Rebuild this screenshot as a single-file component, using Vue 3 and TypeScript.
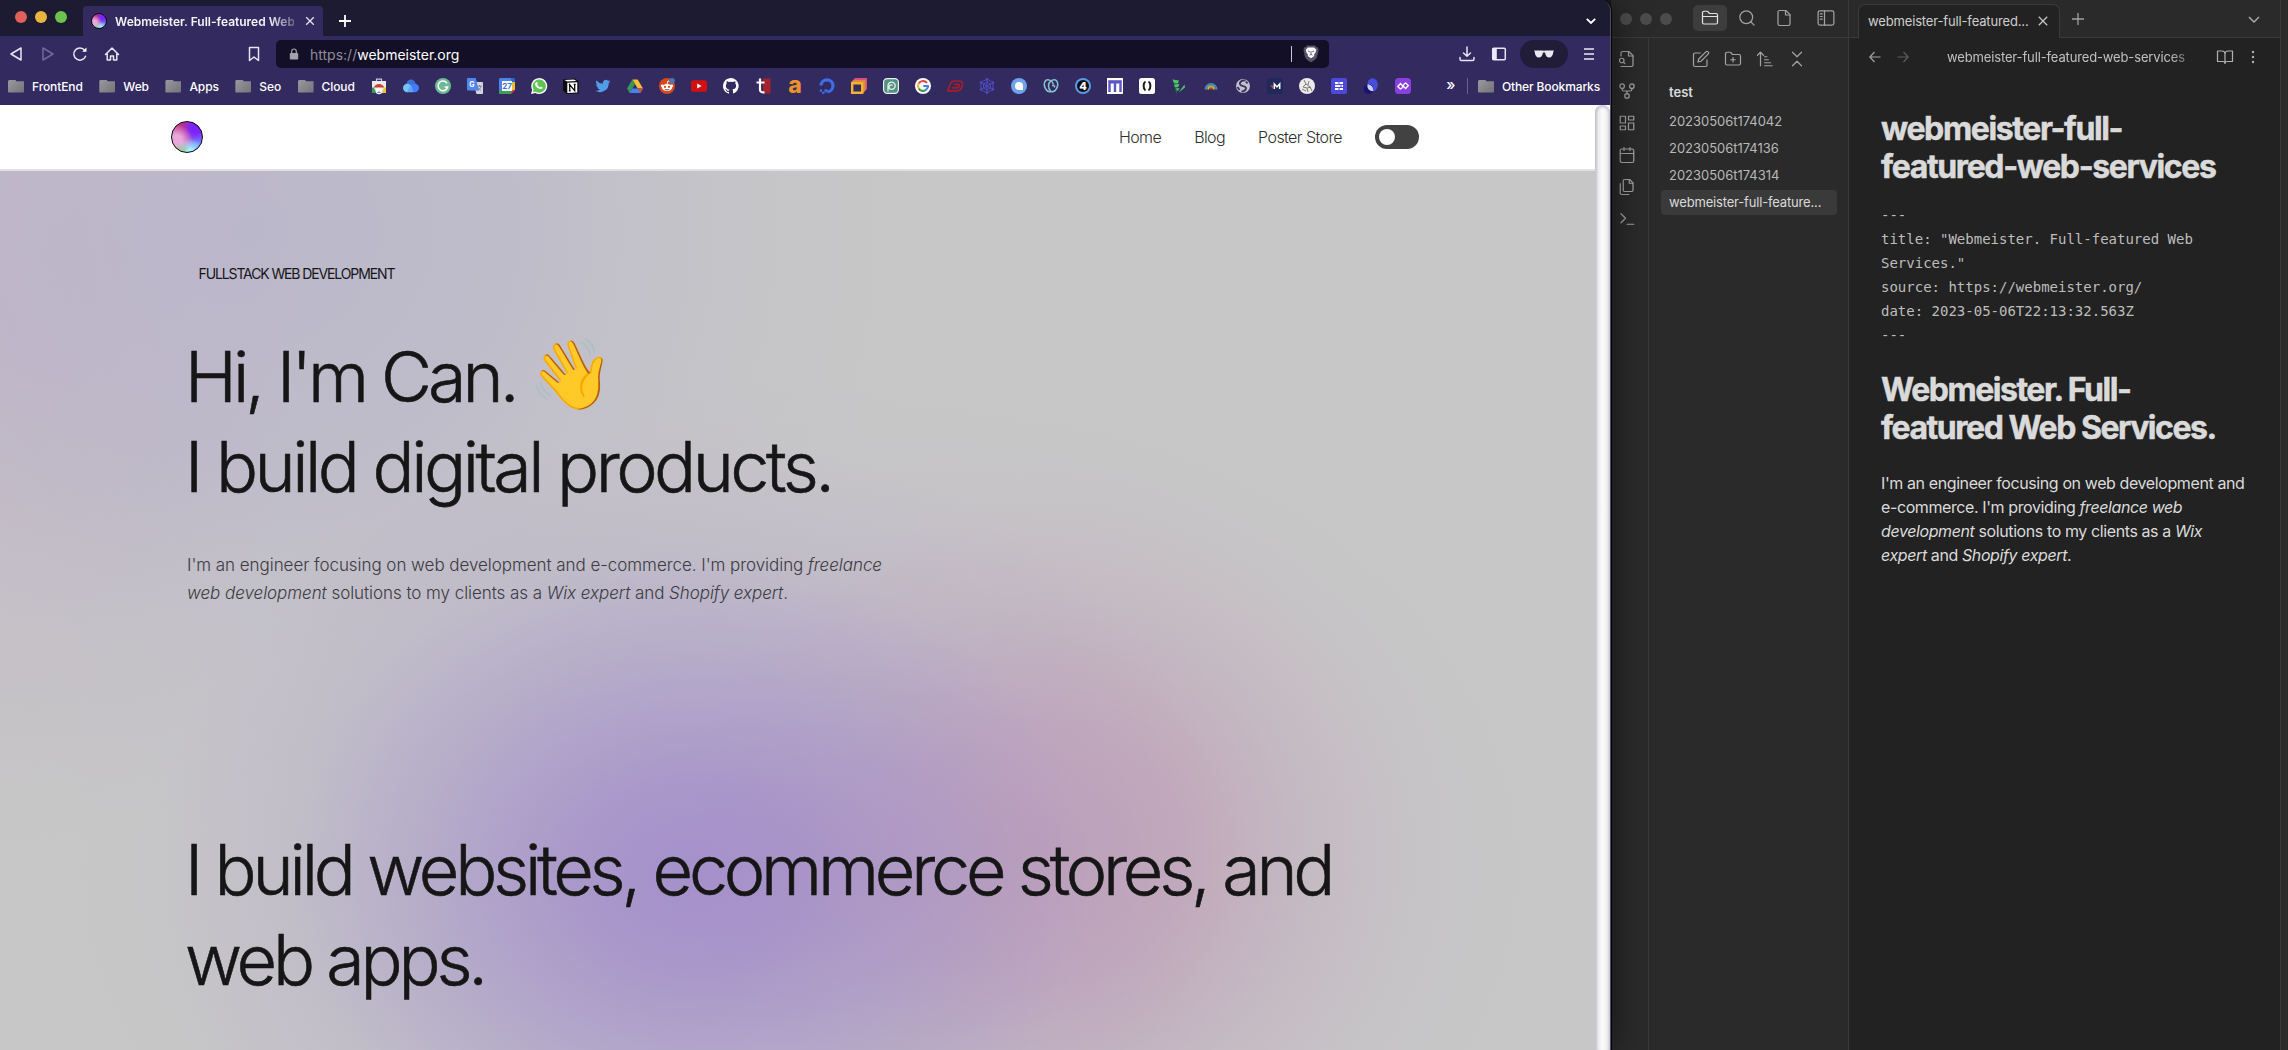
<script setup lang="ts">
interface Glyph { name: string; svg: string }

const folders: string[] = ['FrontEnd', 'Web', 'Apps', 'Seo', 'Cloud']

const round = (fill: string, inner = ''): string => `<circle cx="8" cy="8" r="8" fill="${fill}"/>${inner}`
const label = (t: string, fill: string, size: number, y: number, weight = 700, x = 8): string =>
  `<text x="${x}" y="${y}" font-family="Inter, sans-serif" font-weight="${weight}" font-size="${size}" fill="${fill}" text-anchor="middle">${t}</text>`

const bookmarks: Glyph[] = [
  { name: 'Web Store', svg: '<path d="M1 3h14v12H1z" fill="#e9e9ee"/><path d="M5.500 3V1.200h5V3" fill="none" stroke="#c9c9d2" stroke-width="1.200"/><path d="M2.800 9.500a5.600 5.600 0 0 1 10.400 0z" fill="#cf3e34"/><path d="M1 15V9.500h1.800L5.500 15z" fill="#3c9a54"/><path d="M15 15V9.500h-1.800L10.500 15z" fill="#f3c02f"/><circle cx="8" cy="13" r="3.200" fill="#fff"/><path d="M5.900 15a2.200 2.200 0 0 1 4.200 0z" fill="#4a83ea"/>' },
  { name: 'Cloud', svg: '<circle cx="8" cy="6.200" r="4.600" fill="#3f6fd8"/><circle cx="4.200" cy="10" r="4.200" fill="#77c3f8"/><circle cx="11.800" cy="10" r="4.200" fill="#3f7dfb"/><path d="M4 14.200 8 6l2.500 8.200z" fill="#5aa7fb"/>' },
  { name: 'Grammarly', svg: round('#6fba95', '<path d="M12 5.300A4.800 4.800 0 1 0 12.600 9H9.600" fill="none" stroke="#fff" stroke-width="1.500"/>') },
  { name: 'Translate', svg: '<path d="M6 4h9.200a.8.8 0 0 1 .8.8v10.400a.8.8 0 0 1-.8.8H9.500z" fill="#d4d6dc"/><path d="M10 8.200h5M12.500 7v1.200m1.500 0c-.4 2-1.800 3.500-3.600 4.600m.7-3.300c.6 1.200 1.700 2.300 3 3" fill="none" stroke="#75809a" stroke-width=".9"/><path d="M.8 0h8l3 12.500H.8a.8.8 0 0 1-.8-.8V.8A.8.8 0 0 1 .8 0z" fill="#5187ec"/>' + label('G', '#fff', 7, 8.8, 700, 4.8) },
  { name: 'Calendar', svg: '<path d="M0 1.500A1.500 1.500 0 0 1 1.500 0H12v4H4v12H1.500A1.500 1.500 0 0 1 0 14.500z" fill="#4b83e9"/><path d="M12 0h2.500A1.500 1.500 0 0 1 16 1.500V12h-4z" fill="#2c66cf"/><path d="M12 4h4v8h-4z" fill="#efbd34"/><path d="M0 12h12v4H1.500A1.500 1.500 0 0 1 0 14.500z" fill="#3f9d57"/><path d="M12 12h4l-4 4z" fill="#d84b3c"/><path d="M3 3h10v10H3z" fill="#fff"/>' + label('27', '#3f74d6', 8, 11) },
  { name: 'WhatsApp', svg: '<path d="M0 16l1.200-4.200A8 8 0 1 1 4.300 15z" fill="#fff"/><path d="M1.900 14.100l.7-2.600a6.600 6.600 0 1 1 2.200 2.200z" fill="#5fc454"/><path d="M5.300 4.200c.6-.5 1 0 1.500 1.400.1.400-.6 1-.5 1.200.6 1.100 1.500 1.900 2.700 2.400.3.100.8-.9 1.100-.8 1.300.6 1.600.8 1.500 1.100-.2 1.400-1.700 1.800-2.800 1.500-2.300-.7-4-2.300-4.700-4.300-.3-1 .3-2 1.200-2.500z" fill="#fff"/>' },
  { name: 'Notion', svg: '<path d="M0 1.600 11.500.4 15.600 3v12.600l-12 .4L0 12.400z" fill="#0b0b0d"/><path d="M1.500 2.100 11 1.400l2.400 1.500-9.400.6z" fill="#fff"/><path d="M4.300 4.800 14.300 4.200v10.300l-10 .6z" fill="#fff"/><path d="M6.700 12.800V6.700l5 6V6.300M5.800 6.700h1.500M10.700 6.300h2M5.800 12.800h1.900" fill="none" stroke="#0b0b0d" stroke-width="1.300"/>' },
  { name: 'Twitter', svg: '<path transform="scale(.667)" d="M23 4.900c-.8.400-1.700.6-2.600.8.900-.6 1.600-1.400 2-2.500-.9.500-1.900.9-2.900 1.100a4.600 4.600 0 0 0-7.800 4.200A13 13 0 0 1 2.200 3.700a4.600 4.600 0 0 0 1.400 6.100c-.7 0-1.400-.2-2-.6 0 2.300 1.500 4.200 3.600 4.700-.7.200-1.300.2-2 .1.600 1.800 2.300 3.100 4.200 3.200A9.200 9.200 0 0 1 .6 19a13 13 0 0 0 20-11.600c.9-.6 1.700-1.400 2.400-2.500z" fill="#539ce8"/>' },
  { name: 'Drive', svg: '<path d="M5.300 1.500h5.400L16 10.500h-5.300z" fill="#f3bf35"/><path d="M5.300 1.500 8 6 2.700 15 0 10.500z" fill="#37975a"/><path d="M5.300 10.500H16L13.300 15H2.700z" fill="#4a82ea"/><path d="M13.300 15 16 10.500h-5.300z" fill="#cf4a3c"/>' },
  { name: 'Reddit', svg: round('#d8481f', '<ellipse cx="8" cy="9.500" rx="5" ry="3.600" fill="#fff"/><circle cx="3.300" cy="8" r="1.400" fill="#fff"/><circle cx="12.700" cy="8" r="1.400" fill="#fff"/><path d="M8 6 9 3l2.500.6" fill="none" stroke="#fff" stroke-width=".9"/><circle cx="6" cy="8.900" r="1.100" fill="#d8481f"/><circle cx="10" cy="8.900" r="1.100" fill="#d8481f"/><path d="M5.900 11.200c1.200.9 3 .9 4.200 0" fill="none" stroke="#333" stroke-width=".8"/><circle cx="13" cy="2.800" r="2.800" fill="#4579b8"/>') },
  { name: 'YouTube', svg: '<rect y="2.200" width="16" height="11.600" rx="2.600" fill="#d40f10"/><path d="M6.200 5.600v4.800L10.600 8z" fill="#fff"/>' },
  { name: 'GitHub', svg: '<path d="M8 0C3.600 0 0 3.600 0 8c0 3.500 2.300 6.500 5.500 7.600.4.100.5-.2.500-.4v-1.400c-2.200.5-2.700-1-2.700-1-.4-.9-.9-1.200-.9-1.200-.7-.5.100-.5.100-.5.800.1 1.200.8 1.200.8.700 1.200 1.900.9 2.300.7.100-.5.300-.9.500-1.100-1.800-.2-3.600-.9-3.600-4 0-.9.300-1.600.8-2.100-.1-.2-.4-1 .1-2.100 0 0 .7-.2 2.200.8a7.500 7.500 0 0 1 4 0c1.500-1 2.200-.8 2.200-.8.400 1.100.2 1.900.1 2.100.5.600.8 1.300.8 2.100 0 3.100-1.900 3.700-3.700 3.900.3.300.6.800.6 1.500v2.200c0 .2.100.5.500.4A8 8 0 0 0 8 0z" fill="#fff"/>' },
  { name: 'Tutorials', svg: '<path d="M8 .5h7.500v15H8z" fill="#a3222b"/><path d="M1.500 4.500h8M5 .5v11.200c0 2 1.500 3 4.500 2.700" fill="none" stroke="#fff" stroke-width="2.200"/>' },
  { name: 'Authory', svg: label('a', '#ec922c', 23, 15, 800) },
  { name: 'DigitalOcean', svg: '<path d="M2 7.500a6 6 0 1 1 6.500 6.300" fill="none" stroke="#3c6fe6" stroke-width="3.200"/><path d="M5.500 11.200h3v3h-3zM3 13.800h2.500v2H3zM.8 11.600h2.200v2.200H.8z" fill="#3c6fe6"/>' },
  { name: 'Boxes', svg: '<path d="M4 0h12v11l-4.500 5V4H0z" fill="#d4507e"/><path d="M2.500 2h12v10L11 16V5H1z" fill="#dd8a3a"/><path d="M1.200 5.200h10v9.600h-10z" fill="#332a60" stroke="#f0b22f" stroke-width="2.400"/>' },
  { name: 'Spiral', svg: '<rect x=".6" y=".6" width="14.800" height="14.800" rx="3.600" fill="#51917f" stroke="#e8f2ee" stroke-width="1.200"/><path d="M5 13.500V7.800a3.600 3.600 0 1 1 3.600 3.500 2.200 2.200 0 1 1 1-3.900" fill="none" stroke="#e6f2ec" stroke-width="1.300"/>' },
  { name: 'Google', svg: round('#fff', '<g fill="none" stroke-width="2.100"><path d="M12 4.900A5 5 0 0 0 3.700 5.500" stroke="#dd4b3c"/><path d="M3.700 5.500a5 5 0 0 0 0 5" stroke="#f0b92f"/><path d="M3.700 10.500a5 5 0 0 0 7.700 1.100" stroke="#3a9b55"/><path d="M11.400 11.600A5 5 0 0 0 13 8H8.200" stroke="#4880e6"/></g>') },
  { name: 'Coil', svg: '<g fill="none" stroke="#a51f27" stroke-width="1.700"><path d="M.9 12.800 3.600 5.500C4.300 3.700 5.400 3 7.200 3h5.300C15 3 16 5 15.300 7.300l-.9 2.500c-.7 2-2 3-4 3z"/><path d="M5 9.800h5.400c.7 0 1.200-.4 1.400-1l.3-.9c.3-.8 0-1.500-.9-1.500H7"/></g>' },
  { name: 'Web', svg: '<g fill="none" stroke="#4e4cc0" stroke-width="1"><path d="M8 1 14 4.500v7L8 15l-6-3.500v-7z"/><path d="M8 4 11.500 6v4L8 12l-3.500-2V6zM8 1v14M2 4.500l12 7M14 4.500l-12 7"/></g><g fill="#4e4cc0"><circle cx="8" cy="1.200" r="1.200"/><circle cx="14" cy="4.500" r="1.200"/><circle cx="14" cy="11.500" r="1.200"/><circle cx="8" cy="14.800" r="1.200"/><circle cx="2" cy="11.500" r="1.200"/><circle cx="2" cy="4.500" r="1.200"/></g>' },
  { name: 'Drop', svg: round('#6da3ec', '<path d="M12 12H8a4 4 0 1 1 4-4z" fill="#fff"/>') },
  { name: 'GoDaddy', svg: '<g fill="none" stroke="#86c3cf" stroke-width="1.500"><path d="M8 13.500C3.500 15-.2 7.500 2 3.500 4.200-.2 9.500 2.500 10.500 6.500"/><path d="M8 13.500C12.500 15 16.200 7.500 14 3.500 11.800-.2 6.500 2.500 5.500 7c-.3 2.500.7 4.500 2.500 6.500"/><path d="M11.500 7.500H9M11.500 7.500v2"/></g>' },
  { name: 'Four', svg: round('#5b9be6', `<circle cx="8" cy="8" r="6" fill="#0e0e12"/>${label('4', '#fff', 11, 12, 800)}`) },
  { name: 'M', svg: '<path d="M0 0h16v16H0z" fill="#fff"/><path d="M2.500 14V4.300h11V14M8 4.300V14" fill="none" stroke="#5d55c4" stroke-width="2.400"/><path d="M1.300 3h13.400" stroke="#5d55c4" stroke-width="1.600"/>' },
  { name: 'Brackets', svg: '<rect width="16" height="16" rx="2.500" fill="#fff"/><path d="M6.500 3.500C4 5 4 11 6.500 12.500M9.500 3.500C12 5 12 11 9.500 12.500" fill="none" stroke="#1c1c20" stroke-width="2"/>' },
  { name: 'Vine', svg: '<path d="M1.500 1.500 6.500 2.500v10L5.500 16z" fill="#1f6a40"/><path d="M1.500 1.500 8 2.500 7 5.500 3 5zM3 6.500l5.500-.5-1.200 3-3.300.3zM4.500 10.500l4-.5L7 13zM7.500 14.500 13.500 6.500 14 9.500z" fill="#4fc26c"/>' },
  { name: 'Rainbow', svg: '<g fill="none" stroke-width="1.400"><path d="M2.200 11.500a5.800 5.800 0 0 1 11.600 0" stroke="#4f86d8"/><path d="M3.800 11.500a4.200 4.200 0 0 1 8.400 0" stroke="#57ab6c"/><path d="M5.200 11.500a2.800 2.800 0 0 1 5.600 0" stroke="#dfb345"/><path d="M6.600 11.500a1.400 1.400 0 0 1 2.800 0" stroke="#c24a42"/></g>' },
  { name: 'Globe', svg: '<circle cx="8" cy="8" r="7" fill="#c3c1cc"/><path d="M10.500 2.500C7 2 4.200 4 5 6.300s5.500 1.400 6 3.500-2.200 3.500-4.500 3.800M11 3.500l1.500 2M2.500 9l2 3" fill="none" stroke="#3a3263" stroke-width="1.900"/>' },
  { name: 'Mail', svg: '<rect width="16" height="16" rx="1.500" fill="#202a5a"/><path d="M3 7.500h3v3z" fill="#dc4436"/><path d="M7.300 11V6l2.700 3 2.700-3v5" fill="none" stroke="#fff" stroke-width="1.500"/>' },
  { name: 'Sketch', svg: round('#ecebe9', '<path d="M5 2l2 4-3 3 4 1 1 4M7 6l4 3 2 4M8 10l4-1M3 11l4 2M10 3l-1 4" fill="none" stroke="#6f6d6a" stroke-width=".9"/>') },
  { name: 'Blocks', svg: '<rect width="16" height="16" rx="2" fill="#4c49dc"/><path d="M4 4h3.500v2H4zM8.500 4H12v2H8.500zM4 7h5.500v2H4zM10.500 7H12v2h-1.500zM4 10h3.500v2H4zM8.500 10H12v2H8.500z" fill="#fff"/>' },
  { name: 'Orbs', svg: '<ellipse cx="9.500" cy="6.800" rx="5.300" ry="6.500" fill="#474edb"/><ellipse cx="5.500" cy="11" rx="4.800" ry="5" fill="#1a1470"/><path d="M4.600 6.200c4.200.4 6 3.300 5.600 6.900-4.200.2-6.600-3-5.600-6.900z" fill="#ccd0f5"/>' },
  { name: 'Code', svg: '<rect width="16" height="16" rx="3.500" fill="#8a3fe0"/><path d="M7 10.200 5.300 11 2.800 8.500 5.500 5.500 7.800 8M8.300 8.200l2.300 2.300L13.300 7.500 10.800 5 9 6M6.800 10.300 9.300 5.800" fill="none" stroke="#fff" stroke-width="1.300"/>' },
]

const ribbon: Glyph[] = [
  { name: 'Quick switcher', svg: '<path d="M4 8V4a2 2 0 0 1 2-2h8.500L20 7.500V20a2 2 0 0 1-2 2H4"/><path d="M14 2v6h6"/><circle cx="5" cy="14" r="3"/><path d="m9 18-1.900-1.900"/>' },
  { name: 'Graph view', svg: '<circle cx="12" cy="18.500" r="3"/><circle cx="5.500" cy="5.500" r="3"/><circle cx="18.500" cy="5.500" r="3"/><path d="M18.500 8.500V10a2 2 0 0 1-2 2h-9a2 2 0 0 1-2-2V8.500M12 12v3.500"/>' },
  { name: 'Canvas', svg: '<path d="M3 3h7v9H3zM14 3h7v5h-7zM14 12h7v9h-7zM3 16h7v5H3z"/>' },
  { name: 'Daily note', svg: '<rect x="3" y="4" width="18" height="18" rx="2"/><path d="M16 2v4M8 2v4M3 10h18"/>' },
  { name: 'Templates', svg: '<path d="M15.500 2H8.600A1.600 1.600 0 0 0 7 3.600v12.800A1.600 1.600 0 0 0 8.600 18h9.800a1.600 1.600 0 0 0 1.600-1.600V6.500z"/><path d="M15 2v5h5"/><path d="M3 7.600v12.800A1.600 1.600 0 0 0 4.600 22h9.800"/>' },
  { name: 'Command palette', svg: '<path d="m4 17 6-6-6-6M12 19h9"/>' },
]

const panelTabs: Glyph[] = [
  { name: 'Files', svg: '<path d="M4 20h16a2 2 0 0 0 2-2V8a2 2 0 0 0-2-2h-7.900a2 2 0 0 1-1.700-.9l-.8-1.200A2 2 0 0 0 7.900 3H4a2 2 0 0 0-2 2v13a2 2 0 0 0 2 2zM2 10h20"/>' },
  { name: 'Search', svg: '<circle cx="11" cy="11" r="8.500"/><path d="m21.500 21.500-4.500-4.500"/>' },
  { name: 'New file', svg: '<path d="M14.500 2H6a2 2 0 0 0-2 2v16a2 2 0 0 0 2 2h12a2 2 0 0 0 2-2V7.500z"/><path d="M14 2v6h6"/>' },
]

const fileActions: Glyph[] = [
  { name: 'New note', svg: '<path d="M11 4H4a2 2 0 0 0-2 2v14a2 2 0 0 0 2 2h14a2 2 0 0 0 2-2v-7"/><path d="M18.500 2.500a2.100 2.100 0 0 1 3 3L12 15l-4 1 1-4z"/>' },
  { name: 'New folder', svg: '<path d="M4 20h16a2 2 0 0 0 2-2V8a2 2 0 0 0-2-2h-7.900a2 2 0 0 1-1.700-.9l-.8-1.200A2 2 0 0 0 7.900 3H4a2 2 0 0 0-2 2v13a2 2 0 0 0 2 2zM12 10v6M9 13h6"/>' },
  { name: 'Sort order', svg: '<path d="m2 7 4-4 4 4M6 3v18M11.500 9h3M11.500 13h5M11.500 17h8M11.500 21h10"/>' },
  { name: 'Collapse', svg: '<path d="m6 21 6-6 6 6M6 3l6 6 6-6"/>' },
]

const notes: string[] = ['20230506t174042', '20230506t174136', '20230506t174314']
const frontmatter: string = [
  '---',
  'title: "Webmeister. Full-featured Web',
  'Services."',
  'source: https://webmeister.org/',
  'date: 2023-05-06T22:13:32.563Z',
  '---',
].join('\n')
</script>

<template>
  <div class="desk">
    <section class="browser">
      <div class="strip">
        <div class="lights"><i class="red" /><i class="amber" /><i class="green" /></div>
        <div class="btab">
          <span class="orb small" />
          <span class="btitle">Webmeister. Full-featured Web</span>
          <svg class="bclose" viewBox="0 0 10 10"><path d="M1.200 1.200l7.600 7.600M8.800 1.200 1.200 8.800" /></svg>
        </div>
        <svg class="bplus" viewBox="0 0 12 12"><path d="M6 0v12M0 6h12" /></svg>
        <svg class="bchev" viewBox="0 0 10 6"><path d="M.8.8 5 5 9.200.8" /></svg>
      </div>

      <div class="toolbar">
        <div class="nav">
          <svg viewBox="0 0 16 16"><path d="M13 2v12L3 8z" /></svg>
          <svg viewBox="0 0 16 16" class="off"><path d="M3 2v12l10-6z" /></svg>
          <svg viewBox="0 0 16 16"><path d="M13.600 10.300A6.100 6.100 0 1 1 12.700 4.200" /><path d="M14.500 1.500v4.300h-4.300z" fill="#fff" stroke="none" /></svg>
          <svg viewBox="0 0 16 16"><path d="M1.500 8.500 8 2l6.500 6.500M3.200 7.500V14h3.300v-4h3v4h3.300V7.500" /></svg>
        </div>
        <svg class="mark" viewBox="0 0 16 16"><path d="M3.500 1.500h9v13L8 11l-4.500 3.500z" /></svg>
        <div class="url">
          <svg class="lock" viewBox="0 0 10 12"><rect x=".8" y="5" width="8.400" height="6.500" rx="1" fill="#a3a1ae" /><path d="M2.700 5V3.300a2.300 2.300 0 0 1 4.600 0V5" fill="none" stroke="#a3a1ae" stroke-width="1.200" /></svg>
          <span class="addr"><em>https://</em>webmeister.org</span>
          <i class="bar" />
          <svg class="lion" viewBox="0 0 16 18"><path d="M4 .5h8l1.500 1.800 1.500.3.500 3-1.500 6.400c-.5 1.800-3 3.500-6 5.500-3-2-5.500-3.700-6-5.500L.5 5.600l.5-3 1.500-.3z" fill="#56546a" /><path d="M5 2.500h6l2.200 2-.6 3-1.600 2 .3 1.500L8 13.300 4.700 11 5 9.500l-1.600-2-.6-3z" fill="#fff" /><path d="M5 6l1.800.8M11 6l-1.800.8M8 6v3M6.500 10.300 8 9.300l1.500 1" fill="none" stroke="#56546a" stroke-width=".9" /></svg>
        </div>
        <div class="tools">
          <svg class="t16" viewBox="0 0 16 16"><path d="M8 1v9M4.500 7 8 10.300 11.500 7M1 11.500v1.500a1.500 1.500 0 0 0 1.500 1.500h11a1.500 1.500 0 0 0 1.500-1.500v-1.500" /></svg>
          <svg class="t16" viewBox="0 0 16 16"><rect x="1.700" y="2.200" width="12.600" height="11.600" rx="1" /><path d="M1.500 2h4.300v12H1.500z" fill="#eceaf5" stroke="none" /></svg>
          <span class="shades"><svg viewBox="0 0 20 8"><path d="M0 .5h8.700c.9.300 1.700.3 2.600 0H20l-.7 1.200C19 5.500 17.500 7.500 15.200 7.500S11.500 5.500 11 2.500H9C8.500 5.500 7.100 7.500 4.800 7.500S1 5.500.7 1.700z" fill="#e9e8f0" /></svg></span>
          <svg class="menu" viewBox="0 0 10 12"><path d="M0 1h10M0 6h10M0 11h10" /></svg>
        </div>
      </div>

      <div class="marks">
        <span v-for="f in folders" :key="f" class="fold"><i /><b>{{ f }}</b></span>
        <svg v-for="b in bookmarks" :key="b.name" class="fav" viewBox="0 0 16 16" v-html="b.svg" />
        <span class="more">»</span>
        <i class="sep" />
        <span class="fold last"><i /><b>Other Bookmarks</b></span>
      </div>

      <div class="view">
        <div class="site">
          <header>
            <span class="orb" />
            <nav><a>Home</a><a>Blog</a><a>Poster Store</a><span class="toggle"><i /></span></nav>
          </header>
          <main>
            <p class="eyebrow">FULLSTACK WEB DEVELOPMENT</p>
            <h1><span class="hi">Hi, I'm Can.</span><span class="wave">👋</span><br><span class="dig">I build digital products.</span></h1>
            <p class="lead">I'm an engineer focusing on web development and e-commerce. I'm providing <em>freelance<br>web development</em> solutions to my clients as a <em>Wix expert</em> and <em>Shopify expert</em>.</p>
            <h2>I build websites, ecommerce stores, and<br>web apps.</h2>
          </main>
        </div>
        <div class="scroll" />
      </div>
    </section>

    <section class="vault">
      <div class="left">
        <div class="ltop">
          <div class="dots"><i /><i /><i /></div>
          <div class="ptabs">
            <span v-for="(t, i) in panelTabs" :key="t.name" :class="{ on: i === 0 }"><svg class="ic" viewBox="0 0 24 24" v-html="t.svg" /></span>
          </div>
          <svg class="ic side" viewBox="0 0 24 24"><rect x="1.500" y="2.500" width="21" height="19" rx="2.500" /><path d="M10 2.500v19M4.500 6.500h2.500M4.500 10h2.500M4.500 13.500h2.500" /></svg>
        </div>
        <div class="lbody">
          <div class="ribbon"><svg v-for="r in ribbon" :key="r.name" class="ic" viewBox="0 0 24 24" v-html="r.svg" /></div>
          <div class="files">
            <div class="acts"><svg v-for="a in fileActions" :key="a.name" class="ic" viewBox="0 0 24 24" v-html="a.svg" /></div>
            <div class="vname">test</div>
            <div v-for="n in notes" :key="n" class="note">{{ n }}</div>
            <div class="note sel">webmeister-full-feature...</div>
          </div>
        </div>
      </div>
      <div class="editor">
        <div class="etabs">
          <div class="etab"><span>webmeister-full-featured...</span><svg viewBox="0 0 10 10"><path d="M.8.8l8.400 8.400M9.200.8.800 9.200" /></svg></div>
          <svg class="eplus" viewBox="0 0 12 12"><path d="M6 0v12M0 6h12" /></svg>
          <svg class="echev" viewBox="0 0 12 7"><path d="M1 1l5 5 5-5" /></svg>
        </div>
        <div class="ehead">
          <svg class="arr" viewBox="0 0 12 12"><path d="M11.500 6H1M5.500 1 .8 6l4.700 5" /></svg>
          <svg class="arr dim" viewBox="0 0 12 12"><path d="M.5 6H11M6.500 1l4.700 5-4.700 5" /></svg>
          <span class="crumb">webmeister-full-featured-web-services</span>
          <svg class="ic" viewBox="0 0 24 24"><path d="M2 4h6a4 4 0 0 1 4 4v12.500a3 3 0 0 0-3-2.500H2zM22 4h-6a4 4 0 0 0-4 4v12.500a3 3 0 0 1 3-2.500h7z" /></svg>
          <svg class="kebab" viewBox="0 0 4 14"><circle cx="2" cy="2" r="1.200" /><circle cx="2" cy="7" r="1.200" /><circle cx="2" cy="12" r="1.200" /></svg>
        </div>
        <article>
          <div class="h">webmeister-full-<br>featured-web-services</div>
          <pre>{{ frontmatter }}</pre>
          <div class="h two">Webmeister. Full-<br>featured Web Services.</div>
          <p>I'm an engineer focusing on web development and<br>e-commerce. I'm providing <em>freelance web<br>development</em> solutions to my clients as a <em>Wix<br>expert</em> and <em>Shopify expert</em>.</p>
        </article>
      </div>
      <div class="edge" />
    </section>
  </div>
</template>

<style>
body { background: #191919; overflow: hidden; }
</style>

<style scoped>
* { box-sizing: border-box; }
.desk { display: flex; width: 2288px; height: 1050px; overflow: hidden; background: #191919; font-family: Inter, "Noto Sans", sans-serif; }
svg { display: block; flex: none; }
i { display: block; flex: none; }

/* browser window */
.browser { width: 1611px; flex: none; display: flex; flex-direction: column; position: relative; z-index: 1; border-top-right-radius: 11px; overflow: hidden; border-right: 1px solid #4e4b66; box-shadow: 1px 0 0 #050505, 2px 0 32px rgba(0, 0, 0, .5); background: #1d1b32; }
.strip { height: 36px; flex: none; display: flex; background: #1d1b32; }
.lights { display: flex; gap: 8px; padding: 11px 0 0 15px; width: 83px; }
.lights i { width: 12px; height: 12px; border-radius: 50%; }
.red { background: #e0605a; } .amber { background: #e8b63e; } .green { background: #6cc24c; }
.btab { width: 240px; height: 30px; margin-top: 6px; background: #332a60; border-radius: 4px 4px 0 0; display: flex; align-items: center; padding: 0 8px; }
.orb {
  display: block; flex: none; width: 32px; height: 32px; border-radius: 50%; border: 1.500px solid #0c0a14;
  background:
    radial-gradient(circle at 28% 100%, #8fe07a, transparent 24%),
    radial-gradient(circle at 62% 98%, #a5f6fb 6%, transparent 38%),
    radial-gradient(circle at 14% 62%, #e9a8dc 18%, transparent 52%),
    radial-gradient(circle at 80% 20%, #7b24ff 14%, transparent 48%),
    radial-gradient(circle at 95% 72%, #6f8cff 14%, transparent 46%),
    radial-gradient(circle at 34% 14%, #c4306f, #c03a9c 40%, #a25ae0);
}
.orb.small { width: 16px; height: 16px; }
.btitle { margin-left: 8px; width: 181px; white-space: nowrap; overflow: hidden; font-weight: 600; font-size: 12px; color: #f4f3f8; -webkit-mask-image: linear-gradient(90deg, #000 86%, rgba(0, 0, 0, .3)); mask-image: linear-gradient(90deg, #000 86%, rgba(0, 0, 0, .3)); }
.bclose { width: 10px; height: 10px; margin-left: 11px; fill: none; stroke: #e6e4f0; stroke-width: 1.300; }
.bplus { width: 12px; height: 12px; margin: 15px 0 0 16px; stroke: #fff; stroke-width: 1.800; }
.bchev { width: 10px; height: 6px; margin: 18px 14px 0 auto; fill: none; stroke: #fff; stroke-width: 1.800; }

.toolbar { height: 36px; flex: none; display: flex; align-items: center; background: #332a60; }
.nav { display: flex; gap: 16px; padding-left: 8px; width: 246px; }
.nav svg, .mark, .t16 { width: 16px; height: 16px; fill: none; stroke: #e8e6f2; stroke-width: 1.500; stroke-linejoin: round; stroke-linecap: round; }
.nav svg.off { stroke: #716a98; }
.url { margin-left: 14px; width: 1053px; height: 28px; background: #120f26; border-radius: 5px; display: flex; align-items: center; }
.lock { width: 10px; height: 12px; margin: 0 0 0 13px; }
.addr { margin-left: 11px; font-size: 14px; color: #fff; flex: 1; white-space: nowrap; }
.addr em { font-style: normal; color: #8f8d9b; }
.bar { width: 1px; height: 16px; background: #c9c8d4; margin-right: 11px; }
.lion { width: 16px; height: 18px; margin-right: 10px; }
.tools { display: flex; align-items: center; margin-left: 130px; }
.t16 + .t16 { margin-left: 16px; }
.shades { width: 48px; height: 28px; border-radius: 14px; background: #211c38; margin-left: 13px; display: flex; align-items: center; justify-content: center; }
.shades svg { width: 20px; height: 8px; }
.menu { width: 10px; height: 12px; margin-left: 16px; stroke: #eceaf5; stroke-width: 1.500; }

.marks { height: 33px; flex: none; background: #332a60; display: flex; align-items: center; padding: 0 10px 5px 8px; }
.fold { flex: none; display: flex; align-items: center; color: #fff; font-size: 12px; margin-right: 16.500px; white-space: nowrap; }
.fold b { font-weight: 500; letter-spacing: -.1px; }
.fold i { width: 16px; height: 13px; margin-right: 8px; background: linear-gradient(135deg, #9b99a0, #747279); border-radius: 1.500px; clip-path: polygon(0 0, 45% 0, 52% 14%, 100% 14%, 100% 100%, 0 100%); }
.fav { width: 16px; height: 16px; margin-right: 16px; overflow: visible; }
.more { flex: none; color: #fff; font-size: 15px; line-height: 16px; margin-left: 19px; width: 11px; font-weight: 500; margin-top: -2px; }
.sep { width: 1px; height: 16px; background: #69628e; margin: 0 10px 0 auto; }
.fold.last { margin-right: 0; }
.fold.last b { letter-spacing: -.13px; }

.view { flex: 1; display: flex; min-height: 0; background: #fff; }
.site { width: 1595px; flex: none; display: flex; flex-direction: column; background: #fff; }
.scroll { flex: 1; border-radius: 8px 8px 0 0; background: linear-gradient(90deg, #c4c3c8, #ededed 25%, #fbfbfb 50%, #f2f2f2 78%, #cfcfd3); box-shadow: inset 0 2px 3px #c3c0d4; }
header { height: 66px; flex: none; display: flex; align-items: center; justify-content: space-between; padding: 0 176px 0 171px; border-bottom: 2px solid #e1e1e4; }
nav { display: flex; align-items: center; color: #303030; font-weight: 300; font-size: 16px; letter-spacing: -.58px; }
nav a { margin-right: 33px; }
.toggle { width: 44px; height: 24px; border-radius: 12px; background: #424242; padding: 4px; }
.toggle i { width: 16px; height: 16px; border-radius: 50%; background: #fff; }
main {
  flex: 1; padding: 93px 0 0 187px; color: #161617; overflow: hidden;
  background:
    radial-gradient(ellipse 540px 440px at 690px 705px, rgba(156, 130, 203, .76), rgba(157, 132, 203, .66) 22%, rgba(160, 142, 203, .44) 48%, rgba(172, 160, 203, .17) 74%, transparent),
    radial-gradient(ellipse 460px 440px at 1050px 680px, rgba(190, 140, 172, .62), rgba(190, 143, 174, .48) 30%, rgba(194, 160, 180, .25) 58%, rgba(198, 182, 190, .08) 80%, transparent),
    radial-gradient(ellipse 760px 500px at 800px 700px, rgba(184, 170, 203, .36), rgba(188, 175, 203, .2) 50%, transparent),
    radial-gradient(ellipse 660px 600px at 250px 60px, rgba(172, 164, 207, .44), rgba(175, 167, 207, .35) 38%, rgba(185, 178, 205, .14) 72%, transparent),
    radial-gradient(ellipse 300px 560px at 0 140px, rgba(194, 166, 190, .3), rgba(194, 170, 190, .16) 55%, transparent),
    #c7c7c7;
}
p, h1, h2 { margin: 0; font-weight: 300; }
.eyebrow { padding-left: 11.500px; font-weight: 400; font-size: 14px; line-height: 20px; letter-spacing: -1.120px; }
h1, h2 { font-size: 70px; line-height: 90px; white-space: nowrap; margin-left: -2px; -webkit-text-stroke: .6px #161617; }
h1 { margin-top: 48px; height: 180px; }
.hi { letter-spacing: -3.900px; }
.dig { letter-spacing: -3.540px; }
.wave { display: inline-block; font-size: 69px; line-height: 60px; margin-left: 12px; vertical-align: 4px; -webkit-text-stroke: 0; }
h2 { margin-top: 218px; letter-spacing: -4.210px; }
.lead { margin-top: 39px; font-size: 17px; line-height: 28px; color: #3b3b40; letter-spacing: -.05px; white-space: nowrap; }

/* notes window */
.vault { flex: 1; display: flex; background: #2a2a2a; color: #b8b8b8; }
.ic { width: 18px; height: 18px; fill: none; stroke: #a2a2a2; stroke-width: 1.650; stroke-linecap: round; stroke-linejoin: round; }
.left { width: 238px; flex: none; display: flex; flex-direction: column; border-right: 1px solid #3a3a3a; }
.ltop { height: 38px; flex: none; display: flex; align-items: center; border-bottom: 1px solid #3a3a3a; }
.dots { display: flex; gap: 8px; width: 82px; padding-left: 9px; }
.dots i { width: 12px; height: 12px; border-radius: 50%; background: #4c4c4c; }
.ptabs { display: flex; gap: 3px; margin-top: -1px; }
.ptabs span { width: 34px; height: 26px; border-radius: 5px; display: flex; align-items: center; justify-content: center; }
.ptabs .on { background: #3d3d3d; }
.ptabs .on .ic { stroke: #e2e2e2; }
.side { margin-left: 16px; margin-top: -1px; }
.lbody { flex: 1; display: flex; }
.ribbon { width: 38px; border-right: 1px solid #3a3a3a; display: flex; flex-direction: column; gap: 14px; padding: 12px 0 0 7px; }
.files { flex: 1; padding: 12px 11px 0 12px; font-size: 13px; }
.acts { display: flex; gap: 14px; padding-left: 31px; height: 18px; }
.vname { margin: 14px 0 0 8px; height: 20px; line-height: 20px; font-weight: 600; color: #dcdcdc; }
.note { height: 25px; margin-top: 2px; line-height: 25px; padding-left: 8px; border-radius: 4px; letter-spacing: -.03px; white-space: nowrap; }
.vname + .note { margin-top: 6.500px; }
.note.sel { background: #3a3a3a; color: #dadada; letter-spacing: -.17px; }

.editor { width: 431px; flex: none; background: #222; display: flex; flex-direction: column; }
.etabs { height: 38px; flex: none; background: #2a2a2a; border-bottom: 1px solid #3a3a3a; display: flex; padding-left: 9px; }
.etab { width: 202px; height: 34px; margin-top: 4px; background: #222; border: 1px solid #3a3a3a; border-bottom: 0; border-radius: 7px 7px 0 0; display: flex; align-items: center; padding: 0 0 2px 9px; font-size: 13px; letter-spacing: -.15px; color: #cfcfcf; white-space: nowrap; }
.etab span { width: 170px; }
.etab svg { width: 10px; height: 10px; stroke: #c4c4c4; stroke-width: 1.300; }
.eplus { width: 12px; height: 12px; margin: 13px 0 0 12px; stroke: #a0a0a0; stroke-width: 1.300; }
.echev { width: 12px; height: 7px; margin: 16px 20px 0 auto; fill: none; stroke: #b0b0b0; stroke-width: 1.400; }
.ehead { height: 38px; flex: none; display: flex; align-items: center; padding-left: 20px; }
.arr { width: 12px; height: 12px; margin-right: 16px; fill: none; stroke: #a2a2a2; stroke-width: 1.200; }
.arr.dim { stroke: #5e5e5e; margin-right: 38px; }
.crumb { font-size: 13px; letter-spacing: -.14px; width: 238px; white-space: nowrap; color: #c0c0c0; -webkit-mask-image: linear-gradient(90deg, #000 94%, rgba(0, 0, 0, .5)); mask-image: linear-gradient(90deg, #000 94%, rgba(0, 0, 0, .5)); }
.ehead .ic { margin-left: 31px; stroke: #b0b0b0; }
.kebab { width: 4px; height: 14px; margin-left: 17px; fill: #b0b0b0; }
article { padding: 34px 0 0 32px; color: #dadada; white-space: nowrap; }
.h { font-size: 32px; line-height: 38px; font-weight: 700; letter-spacing: -1.370px; -webkit-text-stroke: .5px #dadada; }
.two { margin-top: 24px; letter-spacing: -1.470px; }
pre { margin: 17px 0 0; font: 14px/24px "DejaVu Sans Mono", monospace; color: #bdbdbd; }
article p { margin-top: 24px; font-size: 16px; line-height: 24px; font-weight: 400; letter-spacing: -.4px; }
.edge { flex: 1; border-left: 1px solid #3a3a3a; }
</style>
